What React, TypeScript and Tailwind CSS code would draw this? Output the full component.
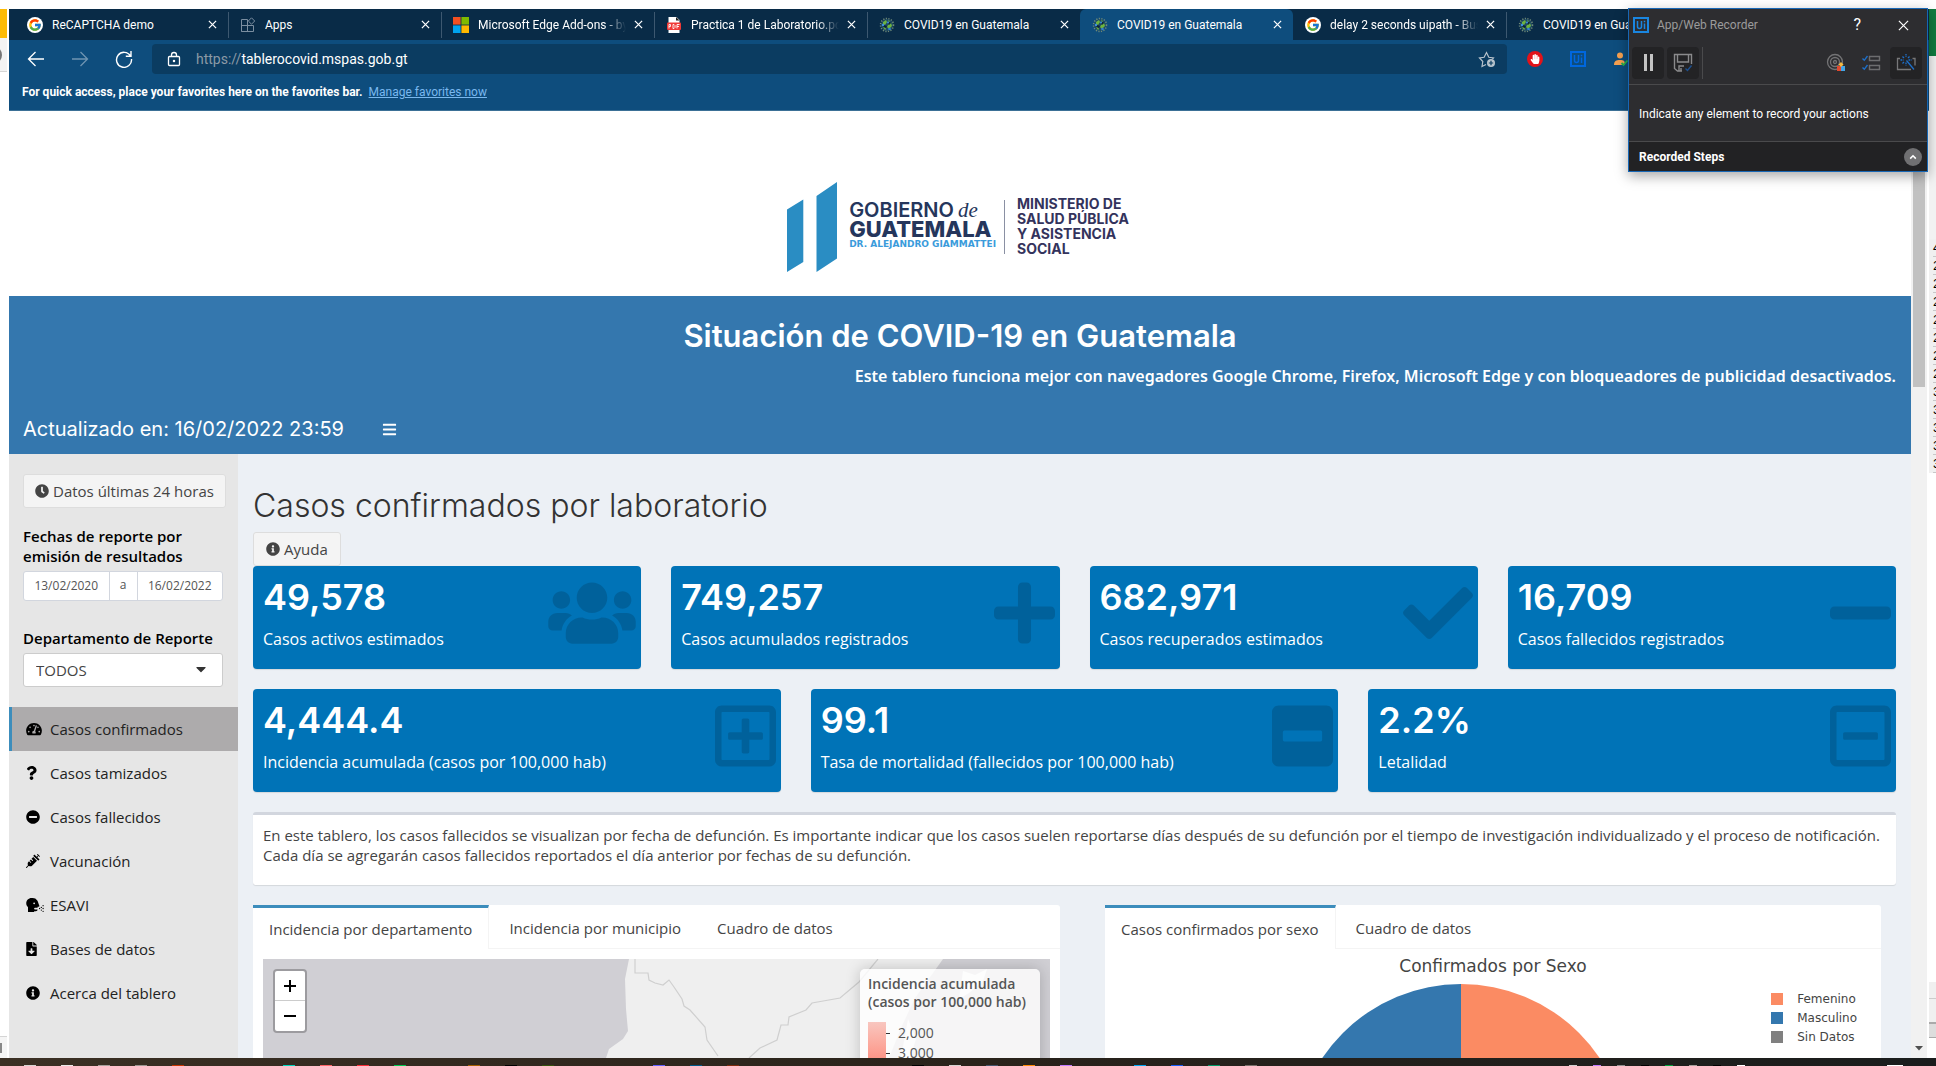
import React from "react";
import { FcGoogle } from "react-icons/fc";
import {
  FaUsers, FaPlus, FaCheck, FaMinus, FaRegPlusSquare, FaMinusSquare, FaRegMinusSquare,
  FaTachometerAlt, FaQuestion, FaMinusCircle, FaSyringe, FaHeadSideCough, FaFileDownload,
  FaInfoCircle, FaClock, FaBars, FaCaretDown, FaHandPaper,
} from "react-icons/fa";

type Icon = React.ComponentType<{ className?: string }>;

/* ---------- Browser icons ---------- */

function GoogleIcon() {
  return (
    <span className="grid size-4 flex-none place-items-center rounded-full bg-white">
      <FcGoogle className="size-[14px]" />
    </span>
  );
}

function AppsIcon() {
  return (
    <svg viewBox="0 0 16 16" className="size-4 flex-none" fill="none" stroke="#7b8ea0" strokeWidth="1">
      <path d="M1.500 14.500v-12h6v12M1.500 8.500h12v6h-12z" />
      <path d="M11.500 .8 14.700 4l-3.200 3.200L8.300 4z" />
    </svg>
  );
}

function MicrosoftIcon() {
  return (
    <svg viewBox="0 0 16 16" className="size-4 flex-none">
      <path fill="#f25022" d="M0 0h7.600v7.600H0z" />
      <path fill="#7fba00" d="M8.400 0H16v7.600H8.400z" />
      <path fill="#00a4ef" d="M0 8.400h7.600V16H0z" />
      <path fill="#ffb900" d="M8.400 8.400H16V16H8.400z" />
    </svg>
  );
}

function PdfIcon() {
  return (
    <svg viewBox="0 0 16 16" className="size-4 flex-none">
      <path d="M2.500 0h8l3 3V16h-11z" fill="#fff" />
      <path d="M10 0v3.500h3.500z" fill="#222" />
      <rect x="1" y="5.500" width="14" height="7.500" rx="1" fill="#f03a37" />
      <path d="M3 11.500v-4h1.500v2H3M7 7.500h1l1 1v2l-1 1H7zM11 11.500v-4h2.500M11 9.500h2" stroke="#fff" strokeWidth=".9" fill="none" />
    </svg>
  );
}

function CovidIcon() {
  return (
    <svg viewBox="0 0 16 16" className="size-4 flex-none">
      <circle cx="8" cy="8" r="6" fill="#1d4a63" />
      <circle cx="8" cy="8" r="6.500" fill="none" stroke="#6f8a78" strokeWidth="1.500" strokeDasharray="1.200 1.400" />
      <path d="M4 5l3-2 1 2-2 3-2-1zM9 8l3-2 1 3-3 3-2-2zM4 10l2 0 1 2-1 1zM9 3l2 1-1 1z" fill="#6cb33f" />
      <path d="M8 5l3 0 1 1-2 2zM5 8l3 1-1 2-3-1z" fill="#0c2438" />
      <circle cx="10.500" cy="12" r="1.300" fill="#2f7fd0" />
      <circle cx="4" cy="8" r="1.200" fill="#3d8fe0" />
      <circle cx="9" cy="5.500" r="1" fill="#3d8fe0" />
    </svg>
  );
}

function CloseIcon() {
  return (
    <svg viewBox="0 0 10 10" className="size-[9px]" stroke="currentColor" strokeWidth="1.400">
      <path d="M1 1l8 8M9 1L1 9" />
    </svg>
  );
}

function UiPathIcon({ className }: { className: string }) {
  return (
    <svg viewBox="0 0 16 16" className={className} fill="none" stroke="currentColor">
      <rect x="1" y="1" width="14" height="14" strokeWidth="2" />
      <path d="M4.500 4v5.500q0 2 2 2t2-2V4M11.500 6.500v5.500M11.500 3.800v1.400" strokeWidth="1.500" />
    </svg>
  );
}

const browserTabs = [
  { title: "ReCAPTCHA demo", icon: GoogleIcon },
  { title: "Apps", icon: AppsIcon },
  { title: "Microsoft Edge Add-ons - by", icon: MicrosoftIcon, fade: true },
  { title: "Practica 1 de Laboratorio.pdf", icon: PdfIcon, fade: true },
  { title: "COVID19 en Guatemala", icon: CovidIcon },
  { title: "COVID19 en Guatemala", icon: CovidIcon, active: true },
  { title: "delay 2 seconds uipath - Busc", icon: GoogleIcon, fade: true },
  { title: "COVID19 en Guatemala", icon: CovidIcon },
];

function BrowserChrome() {
  return (
    <header className="bg-[#0e4d7d] font-['Roboto',sans-serif] text-xs text-white">
      <div className="flex h-[31px] overflow-hidden bg-[#092b47] pl-[6px]">
        {browserTabs.map((t, i) => (
          <div
            key={i}
            className={
              t.active
                ? "flex w-[213px] flex-none items-center rounded-t-md bg-[#0e4d7d] pl-3 pr-1"
                : "flex w-[213px] flex-none items-center pr-1"
            }
          >
            {!t.active && (
              <span className={i === 0 || i === 6 ? "mr-[11px] h-[26px] w-px" : "mr-[11px] h-[26px] w-px bg-[#3d5870]"} />
            )}
            <button className="flex min-w-0 flex-1 items-center gap-[9px] text-left">
              <t.icon />
              <span
                className={
                  t.fade
                    ? "flex-1 overflow-hidden whitespace-nowrap [mask-image:linear-gradient(to_right,black_85%,transparent)]"
                    : "flex-1 overflow-hidden whitespace-nowrap"
                }
              >
                {t.title}
              </span>
            </button>
            <button aria-label="Close tab" className="grid size-6 flex-none place-items-center">
              <CloseIcon />
            </button>
          </div>
        ))}
      </div>

      <div className="flex h-[38px] items-center pl-[18px]">
        <button aria-label="Back" className="w-[44px]">
          <svg viewBox="0 0 18 16" className="h-4 w-[18px]" fill="none" stroke="currentColor" strokeWidth="1.300">
            <path d="M17 8H1.500M8.500 1L1.500 8l7 7" />
          </svg>
        </button>
        <button aria-label="Forward" className="w-[44px] text-[#6f94b1]">
          <svg viewBox="0 0 18 16" className="h-4 w-[18px]" fill="none" stroke="currentColor" strokeWidth="1.300">
            <path d="M1 8h15.500M9.500 1l7 7-7 7" />
          </svg>
        </button>
        <button aria-label="Reload" className="w-[37px]">
          <svg viewBox="0 0 18 18" className="size-[18px]" fill="none" stroke="currentColor" strokeWidth="1.400">
            <path d="M15.500 6A7.500 7.500 0 1 0 16.500 9M16 1v5.200h-5.200" />
          </svg>
        </button>
        <div className="mr-5 flex h-[30px] min-w-0 flex-1 items-center rounded bg-[#0b3c61] pl-[15px] pr-[11px]">
          <svg viewBox="0 0 14 16" className="mr-[15px] h-4 w-[14px] flex-none" fill="none" stroke="currentColor" strokeWidth="1.300">
            <rect x="1.500" y="5.500" width="11" height="9" rx="1" />
            <path d="M4.500 5.500V4a2.500 2.500 0 0 1 5 0v1.500" />
            <circle cx="7" cy="10" r=".6" fill="currentColor" />
          </svg>
          <label htmlFor="url" className="text-sm text-[#8c9aa6]">https://</label>
          <input id="url" defaultValue="tablerocovid.mspas.gob.gt" className="min-w-0 flex-1 bg-transparent text-sm outline-none" />
          <svg viewBox="0 0 18 18" className="size-[18px] flex-none" fill="none" stroke="#b9c4cd" strokeWidth="1.200">
            <path d="M8 14.500l-4 2 .8-5L1.500 8l4.600-.7L8.500 2.500l2.300 4.800 4.600.7-1 1" />
            <circle cx="13" cy="13" r="4" fill="#b9c4cd" stroke="none" />
            <path d="M13 10.800v4.400M10.800 13h4.400" stroke="#0b3c61" />
          </svg>
        </div>
        <div className="flex flex-none items-center gap-[27px] pr-[300px]">
          <button aria-label="Ad blocker" className="grid size-4 place-items-center rounded-full bg-[#e2131a]">
            <FaHandPaper className="size-[10px]" />
          </button>
          <button aria-label="UiPath" className="text-[#0067df]">
            <UiPathIcon className="size-4" />
          </button>
          <button aria-label="Account checker">
            <svg viewBox="0 0 16 16" className="size-4">
              <circle cx="7" cy="4.500" r="3" fill="#f7a150" />
              <path d="M1 14c0-4 2-5 6-5s5 1 5 5z" fill="#f7a150" />
              <path d="M8.500 12l2 2 4-4.500" stroke="#22b14c" strokeWidth="1.800" fill="none" />
            </svg>
          </button>
        </div>
      </div>

      <div className="flex h-[33px] items-center gap-[6px] border-b border-[#3b7096] pb-1 pl-[13px]">
        <span className="font-bold">For quick access, place your favorites here on the favorites bar.</span>
        <a href="#favorites" className="text-[#79b8ef] underline">Manage favorites now</a>
      </div>
    </header>
  );
}

/* ---------- Recorder window ---------- */

function Recorder() {
  return (
    <aside className="absolute right-2 top-2 w-[300px] border border-[#1767b5] bg-[#2d2d30] font-['Roboto',sans-serif] text-xs text-white shadow-[0_4px_12px_rgba(0,0,0,0.35)]">
      <div className="flex h-8 items-center pl-1 pr-[18px]">
        <UiPathIcon className="size-4 text-[#1a86e0]" />
        <span className="ml-2 flex-1 text-[#9b9b9b]">App/Web Recorder</span>
        <button aria-label="Help" className="mr-[37px] text-base">?</button>
        <button aria-label="Close">
          <svg viewBox="0 0 12 12" className="size-[11px]" stroke="currentColor" strokeWidth="1.300">
            <path d="M1 1l10 10M11 1L1 11" />
          </svg>
        </button>
      </div>
      <div className="flex h-11 items-center gap-[3px] border-b border-[#4a4a4c] pl-[3px] pr-[5px]">
        <button aria-label="Pause" className="grid size-8 place-items-center rounded-sm bg-[#232325]">
          <span className="flex gap-[3px]">
            <span className="h-[17px] w-[3px] bg-[#c4c4c4]" />
            <span className="h-[17px] w-[3px] bg-[#c4c4c4]" />
          </span>
        </button>
        <button aria-label="Save" className="grid size-8 place-items-center rounded-sm bg-[#232325]">
          <svg viewBox="0 0 20 20" className="size-5" fill="none" stroke="#8a8a8c" strokeWidth="1.400">
            <path d="M9 18H4.500L1.500 15.500V1.500h17V11M4.500 1.500V9h11V1.500M6 18v-5h5M8 15v3" />
            <path d="M12.500 15.500l2 2 4-5" stroke="#1d4f8e" />
          </svg>
        </button>
        <span className="h-8 w-px bg-[#4a4a4c]" />
        <div className="ml-auto flex items-center gap-[15px] pr-[6px]">
          <button aria-label="Pick element">
            <svg viewBox="0 0 20 20" className="size-5" fill="none" stroke="#737375" strokeWidth="1.300">
              <circle cx="9" cy="9" r="7.500" />
              <circle cx="9" cy="9" r="4.500" />
              <circle cx="9" cy="9" r="1.500" />
              <path d="M11 13h4v5h-4z" fill="#e0482e" stroke="none" />
              <path d="M15 13h4v5h-4z" fill="#41a5e8" stroke="none" />
              <path d="M15 9l2.500 2.500L15 14l-2.500-2.500z" fill="#f5b942" stroke="none" />
            </svg>
          </button>
          <button aria-label="Steps list">
            <svg viewBox="0 0 20 20" className="size-5" fill="none" strokeWidth="1.400">
              <path d="M8.500 3.500h10v4h-10zM8.500 12.500h10v4h-10z" stroke="#6d6d6f" />
              <path d="M1.500 5.500l1.800 1.800L6.500 3M1.500 14.500l1.800 1.800L6.500 12" stroke="#1d6fc9" />
            </svg>
          </button>
        </div>
        <button aria-label="Auto capture" className="grid size-8 place-items-center rounded-sm bg-[#232325]">
          <svg viewBox="0 0 20 20" className="size-5" fill="none" strokeWidth="1.300">
            <path d="M4 5.500H1.500v11H15M16.500 5.500h2.500v7" stroke="#777779" />
            <path d="M10 1v3M10 9.500v3M4.500 7h3M12.500 7h3" stroke="#1d6fc9" strokeDasharray="1.500 .7" />
            <path d="M6.500 3.500l1.500 1.500M13.500 3.500L12 5M6.500 10.500L8 9M10.500 7.500l7.500 9" stroke="#1d6fc9" />
          </svg>
        </button>
      </div>
      <p className="flex h-[57px] items-center border-b border-[#4a4a4c] pl-[10px] pt-[2px]">Indicate any element to record your actions</p>
      <div className="flex h-[29px] items-center justify-between bg-[#222224] pl-[10px] pr-[5px]">
        <span className="font-bold">Recorded Steps</span>
        <button aria-label="Expand" className="grid size-[18px] place-items-center rounded-full bg-[#707072]">
          <svg viewBox="0 0 10 10" className="size-2" fill="none" stroke="#fff" strokeWidth="2">
            <path d="M1.500 7L5 3.500 8.500 7" />
          </svg>
        </button>
      </div>
    </aside>
  );
}

/* ---------- Dashboard ---------- */

function Logo() {
  return (
    <div className="flex justify-center bg-white pb-6 pt-[71px] font-['Inter',sans-serif] text-[#25365c]">
      <svg viewBox="0 0 50 90" className="h-[90px] w-[50px]" fill="#2a8dc3">
        <path d="M0 27.500L16.300 17.500V80L0 90zM29.500 14L50 0v76.500L29.500 90z" />
      </svg>
      <div className="ml-3 mt-[18px] flex flex-col">
        <span className="flex items-baseline gap-1 text-[20px] font-semibold leading-[20px]">
          <span>GOBIERNO</span>
          <i className="font-['Liberation_Serif',serif] text-[21px] font-normal leading-[18px]">de</i>
        </span>
        <span className="text-[22px] font-extrabold leading-[19px]">GUATEMALA</span>
        <span className="font-['DejaVu_Sans',sans-serif] text-[9px] font-bold leading-[10px] text-[#3a9bdb]">DR. ALEJANDRO GIAMMATTEI</span>
      </div>
      <div className="ml-2 mr-1 mt-[18px] h-[54px] border-l border-[#8a90a3] pl-3 text-[14px] font-bold leading-[15px] text-[#33335c]">
        <div className="-mt-1">
          MINISTERIO DE<br />SALUD PÚBLICA<br />Y ASISTENCIA<br />SOCIAL
        </div>
      </div>
    </div>
  );
}

const menu: { label: string; icon: Icon; width: string; active?: boolean }[] = [
  { label: "Casos confirmados", icon: FaTachometerAlt, width: "w-4", active: true },
  { label: "Casos tamizados", icon: FaQuestion, width: "w-[11px]" },
  { label: "Casos fallecidos", icon: FaMinusCircle, width: "w-[14px]" },
  { label: "Vacunación", icon: FaSyringe, width: "w-[14px]" },
  { label: "ESAVI", icon: FaHeadSideCough, width: "w-[18px]" },
  { label: "Bases de datos", icon: FaFileDownload, width: "w-[11px]" },
  { label: "Acerca del tablero", icon: FaInfoCircle, width: "w-[14px]" },
];

function Sidebar() {
  return (
    <nav className="w-[229px] flex-none bg-[#e6e6e6] pt-5 text-black">
      <div className="px-[14px]">
        <button className="flex h-[34px] items-center gap-1 whitespace-nowrap rounded-[3px] border border-[#ddd] bg-[#f4f4f4] px-[11px] text-[#444]">
          <FaClock className="size-[14px]" />
          Datos últimas 24 horas
        </button>
        <label htmlFor="desde" className="mt-[18px] block font-semibold">Fechas de reporte por emisión de resultados</label>
        <div className="mt-[5px] flex h-[30px] w-[200px] rounded-[3px] border border-[#d2d6de] bg-white text-center text-xs text-[#555]">
          <input id="desde" defaultValue="13/02/2020" className="w-0 flex-1 text-center outline-none" />
          <span className="w-[29px] border-x border-[#d2d6de] leading-[26px]">a</span>
          <input aria-label="Hasta" defaultValue="16/02/2022" className="w-0 flex-1 text-center outline-none" />
        </div>
        <label htmlFor="departamento" className="mt-[27px] block font-semibold">Departamento de Reporte</label>
        <div className="relative mt-[5px] w-[200px]">
          <select id="departamento" className="h-[34px] w-full appearance-none rounded-[3px] border border-[#ccc] bg-white px-3 text-[#444]">
            <option>TODOS</option>
          </select>
          <FaCaretDown className="pointer-events-none absolute right-[14px] top-2 size-4 text-[#333]" />
        </div>
      </div>
      <ul className="mt-5">
        {menu.map((m) => (
          <li key={m.label}>
            <a
              href="#menu"
              className={
                m.active
                  ? "flex h-11 items-center border-l-[3px] border-[#3c8dbc] bg-[#adabac] pb-px pl-[14px] text-[#222]"
                  : "flex h-11 items-center border-l-[3px] border-transparent pb-px pl-[14px] text-[#222]"
              }
            >
              <span className="w-6">
                <span className={`block ${m.width}`}><m.icon className="h-[14px] w-full text-black" /></span>
              </span>
              {m.label}
            </a>
          </li>
        ))}
      </ul>
    </nav>
  );
}

type Stat = { value: string; label: string; icon: Icon; width: string };

function StatCard({ value, label, icon: I, width }: Stat) {
  return (
    <div className="flex h-[103px] justify-between rounded-sm bg-[#0073b7] pl-[10px] pr-[5px] pt-[10px] text-white shadow-[0_1px_1px_rgba(0,0,0,0.1)]">
      <div className="whitespace-nowrap">
        <h3 className="font-['Inter',sans-serif] text-[36px] font-semibold leading-[42px]">{value}</h3>
        <p className="mt-[11px] text-base leading-5">{label}</p>
      </div>
      <span className={`mt-[2px] block flex-none ${width}`}>
        <I className="h-[70px] w-full text-black/15" />
      </span>
    </div>
  );
}

const row1: Stat[] = [
  { value: "49,578", label: "Casos activos estimados", icon: FaUsers, width: "w-[88px]" },
  { value: "749,257", label: "Casos acumulados registrados", icon: FaPlus, width: "w-[61px]" },
  { value: "682,971", label: "Casos recuperados estimados", icon: FaCheck, width: "w-[70px]" },
  { value: "16,709", label: "Casos fallecidos registrados", icon: FaMinus, width: "w-[61px]" },
];
const row2: Stat[] = [
  { value: "4,444.4", label: "Incidencia acumulada (casos por 100,000 hab)", icon: FaRegPlusSquare, width: "w-[61px]" },
  { value: "99.1", label: "Tasa de mortalidad (fallecidos por 100,000 hab)", icon: FaMinusSquare, width: "w-[61px]" },
  { value: "2.2%", label: "Letalidad", icon: FaRegMinusSquare, width: "w-[61px]" },
];

function TabBar({ tabs }: { tabs: string[] }) {
  return (
    <div role="tablist" className="flex h-11">
      {tabs.map((t, i) => (
        <button
          key={t}
          role="tab"
          aria-selected={i === 0}
          className={
            i === 0
              ? "whitespace-nowrap border-r border-t-[3px] border-r-[#f4f4f4] border-t-[#3c8dbc] px-4"
              : "whitespace-nowrap border-b border-t-[3px] border-b-[#f4f4f4] border-t-transparent pl-5 pr-4"
          }
        >
          {t}
        </button>
      ))}
      <div className="flex-1 border-b border-[#f4f4f4]" />
    </div>
  );
}

function MapPanel() {
  return (
    <section className="rounded-[3px] bg-white">
      <TabBar tabs={["Incidencia por departamento", "Incidencia por municipio", "Cuadro de datos"]} />
      <div className="relative m-[10px] h-[400px] overflow-hidden bg-[#d0cfd4]">
        <svg viewBox="0 0 787 400" preserveAspectRatio="xMidYMin slice" className="h-full w-full">
          <path d="M366 0l-4 20 1 30 2 22-5 8-14 10-5 15v300h290l-5-306 12-30 14-30 18-25 10-14z" fill="#efefef" />
          <path d="M700 12l12 4 12-6-4 12-14 12-10 6zM645 60l8 20-8 25-10 10z" fill="#f5f5f5" />
          <g fill="none" stroke="#cfcfcf" strokeWidth="1.200">
            <path d="M372 0v14h13l1 7 6 3 8 2 6-5 5 7 8 12 2 7 6 4 15 17 2 13 11 16" />
            <path d="M486 99l11-10 17-8 4-15h7l1-8 17-7 6-7 28-5 19-16 19-23" />
          </g>
        </svg>
        <div className="absolute left-[10px] top-[10px] flex flex-col overflow-hidden rounded border-2 border-black/25 bg-white bg-clip-padding text-black">
          <button aria-label="Acercar" className="grid h-[30px] w-[30px] place-items-center border-b border-[#ccc]">
            <svg viewBox="0 0 12 12" className="size-3" stroke="currentColor" strokeWidth="2"><path d="M0 6h12M6 0v12" /></svg>
          </button>
          <button aria-label="Alejar" className="grid h-[30px] w-[30px] place-items-center">
            <svg viewBox="0 0 12 12" className="size-3" stroke="currentColor" strokeWidth="2"><path d="M0 6h12" /></svg>
          </button>
        </div>
        <div className="absolute right-[10px] top-[10px] h-[200px] w-[180px] rounded-[5px] bg-white/80 px-2 pt-[6px] text-sm text-[#555] shadow-[0_0_15px_rgba(0,0,0,0.2)]">
          <div className="whitespace-nowrap font-semibold leading-[18px]">Incidencia acumulada<br />(casos por 100,000 hab)</div>
          <div className="mt-[11px] flex">
            <div className="h-[130px] w-[18px] bg-gradient-to-b from-[#f8c6bf] via-[#fb6a5a] to-[#a50f15]" />
            <ul className="mt-px">
              {["2,000", "3,000", "4,000", "5,000"].map((v) => (
                <li key={v} className="flex h-5 items-center gap-2">
                  <span className="h-px w-1 bg-[#333]" />
                  {v}
                </li>
              ))}
            </ul>
          </div>
        </div>
      </div>
    </section>
  );
}

const sexLegend = [
  { label: "Femenino", swatch: "size-3 bg-[#fb8b63]" },
  { label: "Masculino", swatch: "size-3 bg-[#3477ae]" },
  { label: "Sin Datos", swatch: "size-3 bg-[#808080]" },
];

function SexPanel() {
  return (
    <section className="rounded-[3px] bg-white">
      <TabBar tabs={["Casos confirmados por sexo", "Cuadro de datos"]} />
      <div className="relative h-[400px] font-['DejaVu_Sans',sans-serif] text-[#444]">
        <h4 className="pt-[7px] text-center text-[17px] leading-5">Confirmados por Sexo</h4>
        <svg viewBox="0 0 334 334" className="ml-[189px] mt-2 size-[334px]">
          <path d="M167 0a167 167 0 0 1 0 334z" fill="#fb8b63" />
          <path d="M167 0a167 167 0 0 0 0 334z" fill="#3477ae" />
        </svg>
        <ul className="absolute right-6 top-10 text-xs">
          {sexLegend.map((s) => (
            <li key={s.label} className="flex h-[19px] items-center gap-[14px]">
              <span className={s.swatch} />
              {s.label}
            </li>
          ))}
        </ul>
      </div>
    </section>
  );
}

function Dashboard() {
  return (
    <main className="flex min-w-0 flex-1 flex-col overflow-hidden font-['Open_Sans',sans-serif] text-[15px] leading-5 text-[#444]">
      <Logo />
      <div className="bg-[#3477ae] pt-5 text-white">
        <h1 className="text-center font-['Inter',sans-serif] text-[31px] font-semibold leading-10">Situación de COVID-19 en Guatemala</h1>
        <p className="pr-[15px] text-right font-['Noto_Sans',sans-serif] text-base font-semibold leading-10">
          Este tablero funciona mejor con navegadores Google Chrome, Firefox, Microsoft Edge y con bloqueadores de publicidad desactivados.
        </p>
        <div className="flex h-[58px] items-center pl-[14px] pt-2">
          <span className="font-['Inter',sans-serif] text-xl">Actualizado en: 16/02/2022 23:59</span>
          <button aria-label="Menú" className="ml-[38px]"><FaBars className="size-[15px]" /></button>
        </div>
      </div>
      <div className="flex min-h-0 flex-1">
        <Sidebar />
        <div className="min-w-0 flex-1 overflow-hidden bg-[#ecf0f5] px-[15px] pt-8">
          <h2 className="font-['Inter',sans-serif] text-[32px] font-light leading-10 text-[#333]">Casos confirmados por laboratorio</h2>
          <button className="mt-[6px] flex h-[34px] items-center gap-1 rounded-[3px] border border-[#ddd] bg-[#f4f4f4] px-3">
            <FaInfoCircle className="size-[14px]" />
            Ayuda
          </button>
          <div className="grid grid-cols-4 gap-[30px]">
            {row1.map((c) => <StatCard key={c.label} {...c} />)}
          </div>
          <div className="mt-5 grid grid-cols-3 gap-[30px]">
            {row2.map((c) => <StatCard key={c.label} {...c} />)}
          </div>
          <p className="mt-5 rounded-[3px] border-t-[3px] border-[#d2d6de] bg-white px-[10px] pb-5 pt-[10px] shadow-[0_1px_1px_rgba(0,0,0,0.1)]">
            En este tablero, los casos fallecidos se visualizan por fecha de defunción. Es importante indicar que los casos suelen reportarse días después de su defunción por el tiempo de investigación individualizado y el proceso de notificación. Cada día se agregarán casos fallecidos reportados el día anterior por fechas de su defunción.
          </p>
          <div className="mt-5 grid grid-cols-[807fr_776fr] gap-[45px] pr-[15px]">
            <MapPanel />
            <SexPanel />
          </div>
        </div>
      </div>
    </main>
  );
}

/* ---------- Desktop edges ---------- */

const taskbarApps = [
  "bg-white/80", "bg-white/90", "bg-stone-400", "bg-white/50", "bg-orange-700", "", "", "bg-teal-400",
  "bg-red-400", "bg-red-500", "bg-green-500", "", "bg-yellow-700", "bg-black", "bg-lime-900", "", "",
  "bg-indigo-500", "bg-sky-800", "bg-orange-900", "", "", "", "", "bg-black", "bg-stone-300", "bg-slate-600",
  "bg-orange-400", "bg-purple-400", "", "bg-sky-500", "bg-blue-600", "bg-emerald-600", "bg-stone-500",
];
const trayIcons = ["bg-white/80", "bg-purple-400", "bg-white/50", "bg-black", "bg-green-600", "bg-stone-400", "bg-black", "bg-white"];

function Taskbar() {
  return (
    <footer className="flex h-2 flex-none items-end bg-gradient-to-r from-[#3b3024] via-[#2a231b] to-[#1a1d1d] pl-[11px]">
      {taskbarApps.map((c, i) => (
        <span key={i} className="flex w-[37px] flex-none justify-center">
          <span className={`h-px w-3 ${c}`} />
        </span>
      ))}
      <span className="ml-auto flex gap-4 pr-[142px]">
        {trayIcons.map((c, i) => <span key={i} className={`h-px w-2 ${c}`} />)}
      </span>
      <span className="mr-[33px] h-px w-4 bg-white" />
    </footer>
  );
}

export default function App() {
  return (
    <div className="relative flex h-screen flex-col overflow-hidden bg-white">
      <div className="flex min-h-0 flex-1">
        <div className="flex w-[9px] flex-none flex-col pr-[2px] pt-[9px]">
          <div className="h-[29px] bg-[#fdbb05]" />
          <div className="flex h-[34px] items-center overflow-hidden border-b border-[#d5d5d5] bg-[#f3f3f3]">
            <div className="-ml-4 size-[18px] flex-none rounded-full border-2 border-[#777]" />
          </div>
          <div className="mt-auto h-[22px] border-t border-[#d5d5d5] bg-[#f5f5f5] pt-[6px]">
            <div className="h-[10px] w-[2px] bg-[#888]" />
          </div>
        </div>
        <div className="flex min-w-0 flex-1 flex-col pt-[9px]">
          <BrowserChrome />
          <div className="flex min-h-0 flex-1">
            <Dashboard />
            <div className="flex w-[18px] flex-none flex-col justify-between border-r-2 border-white bg-[#f1f1f1] px-[2px] pb-[6px]">
              <div className="h-[276px] bg-[#c1c1c1]" />
              <svg viewBox="0 0 12 8" className="h-2 w-3" fill="#505050"><path d="M2 2h8L6 6.500z" /></svg>
            </div>
          </div>
        </div>
        <div className="flex w-[7px] flex-none flex-col pt-[9px]">
          <div className="h-[47px] bg-[#107c41]" />
          <div className="h-[183px] bg-[#f2f2f2]" />
          <ul className="overflow-hidden bg-[#f0f0f0] pl-1 font-['Liberation_Sans',sans-serif] text-[13px] leading-[17px] text-black">
            {["4", "2", "2", "2", "2", "2", "2", "2", "3", "3", "3", "3", "3"].map((n, i) => (
              <li key={i} className="h-[18px] border-b border-[#c8c8c8]">{n}</li>
            ))}
          </ul>
          <div className="mt-auto flex h-[76px] flex-col bg-[#f0f0f0] pt-4">
            <div className="h-6 border-t border-[#ccc]" />
            <div className="h-4 border-b border-t-2 border-[#aaa] bg-[#ddd]" />
            <div className="flex-1 bg-white" />
          </div>
        </div>
      </div>
      <Taskbar />
      <Recorder />
    </div>
  );
}
